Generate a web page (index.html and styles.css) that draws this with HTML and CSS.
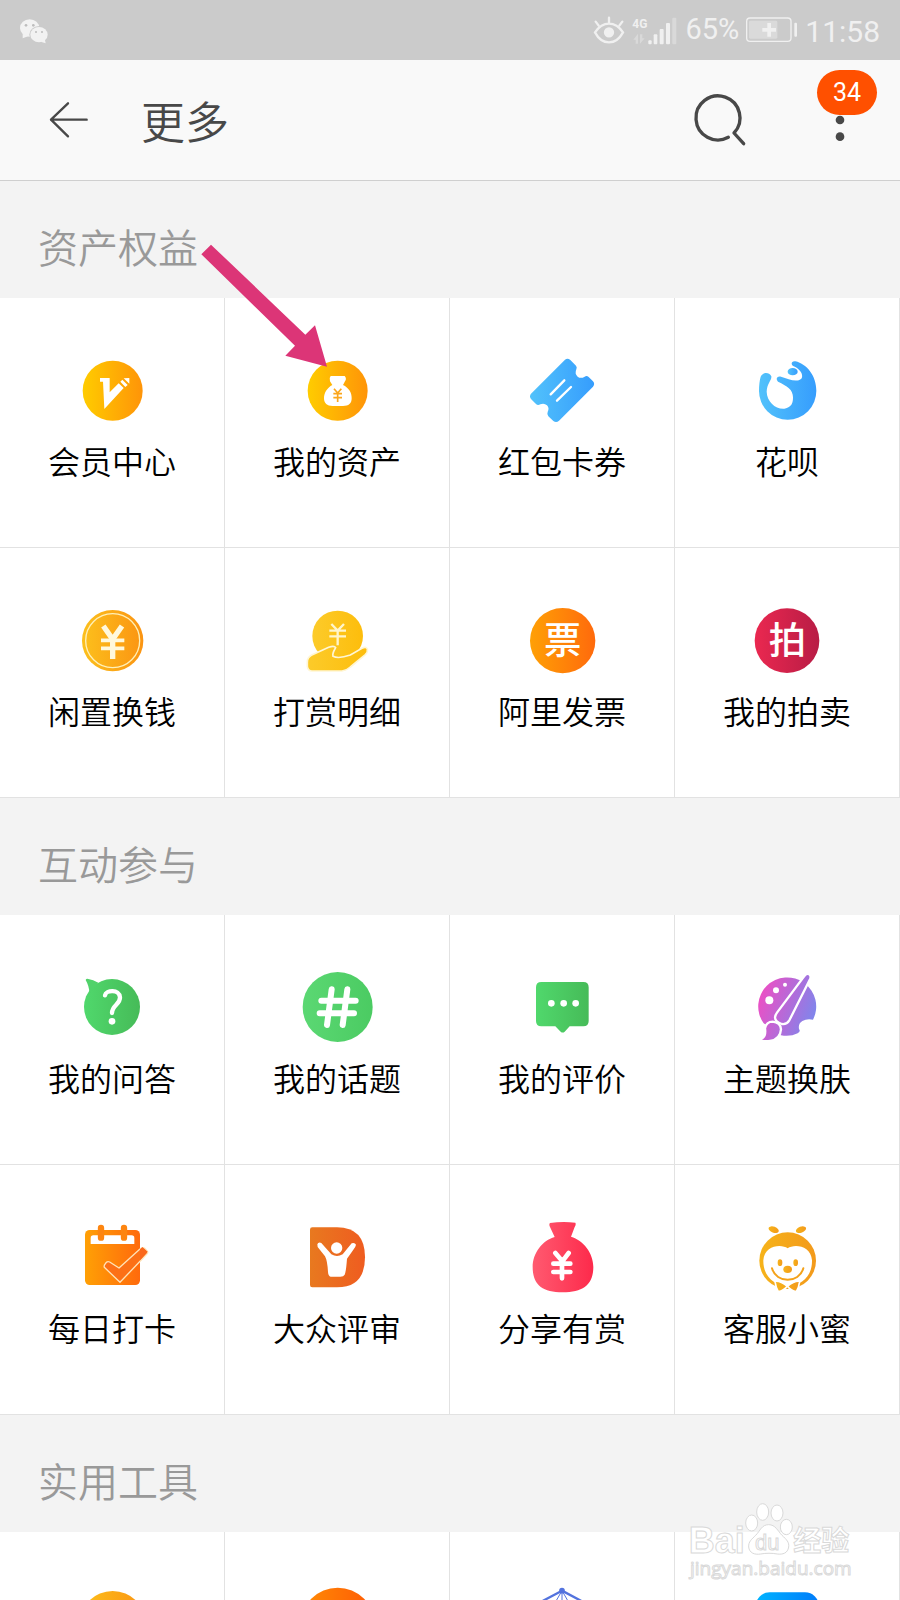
FILE: index.html
```html
<!DOCTYPE html>
<html lang="zh-CN">
<head>
<meta charset="utf-8">
<meta name="viewport" content="width=device-width, initial-scale=1">
<title>更多</title>
<link rel="stylesheet" href="styles.css">
</head>
<body>
<svg class="defs" width="0" height="0" aria-hidden="true">
  <defs>
    <linearGradient id="gold"><stop offset="0" stop-color="#ffcc00"/><stop offset="1" stop-color="#ff9408"/></linearGradient>
    <linearGradient id="coin"><stop offset="0" stop-color="#fcc01c"/><stop offset="1" stop-color="#fb9412"/></linearGradient>
    <linearGradient id="yellow"><stop offset="0" stop-color="#fccb2a"/><stop offset="1" stop-color="#fdbd0c"/></linearGradient>
    <linearGradient id="sky"><stop offset="0" stop-color="#52c2fb"/><stop offset="1" stop-color="#369dfd"/></linearGradient>
    <linearGradient id="orange"><stop offset="0" stop-color="#ffa005"/><stop offset="1" stop-color="#ff6a0c"/></linearGradient>
    <linearGradient id="flame"><stop offset="0" stop-color="#ff8c05"/><stop offset="1" stop-color="#ff5a05"/></linearGradient>
    <linearGradient id="crimson"><stop offset="0" stop-color="#ea2850"/><stop offset="1" stop-color="#b81c45"/></linearGradient>
    <linearGradient id="green"><stop offset="0" stop-color="#50d86c"/><stop offset="1" stop-color="#46bb58"/></linearGradient>
    <linearGradient id="mint"><stop offset="0" stop-color="#5bd873"/><stop offset="1" stop-color="#4bcb62"/></linearGradient>
    <linearGradient id="violet" gradientUnits="userSpaceOnUse" x1="35" y1="80" x2="208" y2="140"><stop offset="0" stop-color="#ee4ec4"/><stop offset="1" stop-color="#7e86ec"/></linearGradient>
    <linearGradient id="rust"><stop offset="0" stop-color="#e8791f"/><stop offset="1" stop-color="#ef5c20"/></linearGradient>
    <linearGradient id="rose"><stop offset="0" stop-color="#ff5a70"/><stop offset="1" stop-color="#fd2a4b"/></linearGradient>
    <linearGradient id="honey"><stop offset="0" stop-color="#f6b31a"/><stop offset="1" stop-color="#f39a1b"/></linearGradient>
    <linearGradient id="blue"><stop offset="0" stop-color="#00b4ff"/><stop offset="1" stop-color="#007bfa"/></linearGradient>
  </defs>
</svg>
<div class="app">
  <div class="status">
    <svg class="status-chat" viewBox="0 0 96 90" fill="#f2f2f2">
      <ellipse cx="35" cy="39" rx="29" ry="26"/><path d="M14 58v12l16-6z"/>
      <ellipse cx="63" cy="59" rx="29" ry="26" fill="#cbcbcb"/>
      <ellipse cx="63" cy="59" rx="26" ry="23"/><path d="M68 80l15 5-3-14z"/>
      <g fill="#bdbdbd"><circle cx="24" cy="31" r="4"/><circle cx="46" cy="31" r="4"/><circle cx="54" cy="51" r="3"/><circle cx="72" cy="51" r="3"/></g>
    </svg>
    <div class="status-info">
      <svg class="status-eye" viewBox="0 0 96 90" fill="none" stroke="#f0f0f0" stroke-width="7" stroke-linecap="round">
        <path d="M6 52Q24 26 48 26T90 52Q74 82 48 82T6 52Z"/><circle cx="48" cy="52" r="12" fill="#f0f0f0"/>
        <path d="M48 8v14M8 20l9 12M88 20l-9 12"/>
      </svg>
      <svg class="status-signal" viewBox="0 0 138 90" fill="#f0f0f0">
        <text x="1" y="40" class="network">4G</text>
        <rect x="49" y="76" width="10" height="12" rx="3"/><rect x="65" y="58" width="11" height="30" rx="3"/><rect x="83" y="42" width="12" height="46" rx="3"/><rect x="102" y="24" width="12" height="64" rx="3"/>
        <g opacity=".4"><rect x="121" y="8" width="12" height="80" rx="3"/><path d="M4 74l14-18v30h-7v-12zM38 70L24 86V58h7v12z"/></g>
      </svg>
      <span class="battery-level">65%</span>
      <svg class="status-battery" viewBox="0 0 156 78" fill="#f0f0f0">
        <rect x="2" y="3" width="133" height="70" rx="10" fill="none" stroke="#f0f0f0" stroke-width="4"/>
        <rect x="9" y="11" width="85" height="54" rx="4" opacity=".4"/>
        <path d="M64 18h11v15h15v11H75v15H64V44H49V33h15z"/><rect x="145" y="17" width="8" height="42" rx="3"/>
      </svg>
      <time>11:58</time>
    </div>
  </div>

  <header class="header">
    <button class="icon-button back" type="button" aria-label="返回">
      <svg viewBox="0 0 144 144" fill="none" stroke="#484848" stroke-width="7" stroke-linecap="round" stroke-linejoin="round"><path d="M69 22L18 71l51 50M18 71h107"/></svg>
    </button>
    <h1>更多</h1>
    <button class="icon-button" type="button" aria-label="搜索">
      <svg viewBox="0 0 180 180" fill="none" stroke="#484848" stroke-width="10" stroke-linecap="round" stroke-linejoin="round"><path d="M115 142A66 66 0 1 1 132 129L161 161"/></svg>
    </button>
    <button class="icon-button" type="button" aria-label="更多">
      <svg viewBox="0 0 180 180" fill="#484848"><circle cx="90" cy="40" r="13"/><circle cx="90" cy="90" r="13"/><circle cx="90" cy="140" r="13"/></svg>
      <span class="badge">34</span>
    </button>
  </header>

  <main class="content">
    <section>
      <h2>资产权益</h2>
      <nav class="grid">
        <a class="tile" href="#">
          <svg viewBox="0 0 240 240"><circle cx="122" cy="122" r="90" fill="url(#gold)"/><g fill="#fff"><path d="M84 84h29v43l27-27 15 14-58 63-4-82H84zM145 95l6-6 16 16-7 6zM155 85l17-1v17z"/></g></svg>
          <span>会员中心</span>
        </a>
        <a class="tile" href="#">
          <svg viewBox="0 0 240 240"><circle cx="122" cy="122" r="90" fill="url(#gold)"/><path fill="#fff" d="M101 78h42q7 8 1 16l-6 11c17 8 27 23 26 40 0 16-9 23-26 23h-31c-17 0-26-8-26-23 0-17 10-32 25-40l-7-11q-4-9 2-16z"/><path fill="none" stroke="#fba61c" stroke-width="5" d="M111 116l11 13 11-13M122 128v28M109 131h26M109 143h26"/></svg>
          <span>我的资产</span>
        </a>
        <a class="tile" href="#">
          <svg viewBox="0 0 240 240"><path fill="url(#sky)" d="M129 29q8-6 16 1l17 17q4 5 1 11-6 14 4 22 9 7 21 0 6-4 12 1l13 13q7 8 0 16L111 212q-8 7-17 1l-15-14q-5-6-2-13 6-12-2-20-9-8-20-3-8 4-13-1l-15-15q-6-8 0-16z"/><path fill="none" stroke="#fff" stroke-width="7" stroke-linecap="round" d="M86 133l41-42M105 152l42-41"/></svg>
          <span>红包卡券</span>
        </a>
        <a class="tile" href="#">
          <svg viewBox="0 0 240 240" fill="url(#sky)"><path d="M41 80C48 66 66 66 73 79C75 90 60 100 59 125C60 155 85 178 112 176C135 172 138 158 138 142C138 118 120 108 93 95C85 88 90 77 102 80C125 88 150 98 163 86C171 74 158 56 140 49C130 44 133 32 145 34C180 42 208 78 208 122A86 86 0 0 1 122 209A86 86 0 0 1 36 122C36 105 38 90 41 80Z"/><ellipse cx="137" cy="65" rx="15" ry="11"/></svg>
          <span>花呗</span>
        </a>
        <a class="tile" href="#">
          <svg viewBox="0 0 240 240" fill="none"><circle cx="122" cy="122" r="92" fill="url(#coin)"/><circle cx="122" cy="122" r="81" stroke="#fff0b8" stroke-width="4"/><path stroke="#fff8dc" stroke-width="16" d="M94 78l28 40 28-40M122 112v65"/><path stroke="#fff8dc" stroke-width="11" d="M87 121h70M87 145h70"/></svg>
          <span>闲置换钱</span>
        </a>
        <a class="tile" href="#">
          <svg viewBox="0 0 240 240"><circle cx="122" cy="108" r="76" fill="url(#yellow)"/><path fill="none" stroke="#fff5cc" stroke-width="7" d="M103 72l19 20 19-20M122 90v46M97 92h50M97 109h50"/><path fill="url(#yellow)" stroke="#fff6d4" stroke-width="5" d="M31 187q0-14 12-21l52-24q17-6 21 1c-4 7-11 17-8 26 12 6 32 3 52-4l35-20q12-7 16 2 2 9-6 17l-45 37q-12 11-25 12H45q-12 0-14-14z"/></svg>
          <span>打赏明细</span>
        </a>
        <a class="tile" href="#">
          <svg viewBox="0 0 240 240"><circle cx="122" cy="122" r="98" fill="url(#orange)"/><text class="seal" x="122" y="163">票</text></svg>
          <span>阿里发票</span>
        </a>
        <a class="tile" href="#">
          <svg viewBox="0 0 240 240"><circle cx="120" cy="122" r="97" fill="url(#crimson)"/><text class="seal" x="121" y="163">拍</text></svg>
          <span>我的拍卖</span>
        </a>
      </nav>
    </section>

    <section>
      <h2>互动参与</h2>
      <nav class="grid">
        <a class="tile" href="#">
          <svg viewBox="0 0 240 240"><g fill="url(#green)"><circle cx="120" cy="120" r="84"/></g><path fill="#50d26a" d="M41 39q2-5 8-3 14 2 30 11l-27 31q0-20-11-39z"/><path fill="none" stroke="#fff" stroke-width="13" stroke-linecap="round" d="M99 85C102 69 142 66 144 91C145 112 120 114 120 138"/><circle cx="120" cy="163" r="10" fill="#fff"/></svg>
          <span>我的问答</span>
        </a>
        <a class="tile" href="#">
          <svg viewBox="0 0 240 240"><circle cx="122" cy="120" r="105" fill="url(#mint)"/><path fill="none" stroke="#fff" stroke-width="18" stroke-linecap="round" d="M104 67L90 174M151 67l-14 107M73 101h103M68 139h103"/></svg>
          <span>我的话题</span>
        </a>
        <a class="tile" href="#">
          <svg viewBox="0 0 240 240"><path fill="url(#green)" d="M58 45h126q16 0 16 16v101q0 16-16 16h-41l-15 16q-6 5-12 0l-16-16H58q-16 0-16-16V61q0-16 16-16z"/><g fill="#fff"><circle cx="88" cy="109" r="10"/><circle cx="125" cy="109" r="10"/><circle cx="161" cy="109" r="10"/></g></svg>
          <span>我的评价</span>
        </a>
        <a class="tile" href="#">
          <svg viewBox="0 0 240 240" fill="url(#violet)"><path d="M50 169A87 87 0 1 1 198 158Q180 154 166 162Q153 170 156 186Q162 194 152 199Q130 210 102 205Z"/><g fill="#fff"><circle cx="67" cy="100" r="12"/><circle cx="87" cy="70" r="9"/><circle cx="114" cy="53" r="6"/></g><g stroke="#fff" stroke-width="7" stroke-linejoin="round"><path d="M173 26q8-9 15-3 5 5 1 14l-62 123q-9 14-23 11-20-7-20-20 1-7 6-14z"/><path d="M48 212q9-8 6-28 4-20 23-20 24 3 25 23-2 30-33 35-14 2-28-1-1-5 7-9z"/></g></svg>
          <span>主题换肤</span>
        </a>
        <a class="tile" href="#">
          <svg viewBox="0 0 240 240"><rect x="39" y="39" width="165" height="165" rx="14" fill="url(#orange)"/><path fill="#fff" d="M56 81V63q0-8 8-8h115q8 0 8 8v18z"/><path fill="none" stroke="#fd8510" stroke-width="19" stroke-linecap="round" d="M87 33v29M156 33v29"/><path fill="#fc7016" stroke="#ffe3b8" stroke-width="4" stroke-linejoin="round" d="M97 151q-2-6 3-11 5-9 13-5l28 18 62-56q9-8 15-3l7 7q5 5-1 11l-80 84z"/><path fill="#fa681c" d="M204 97l7-7 16 14-23 26z"/></svg>
          <span>每日打卡</span>
        </a>
        <a class="tile" href="#">
          <svg viewBox="0 0 240 240"><path fill="url(#rust)" d="M46 31h74q84 0 84 90t-84 90H46q-7 0-7-7V38q0-7 7-7z"/><g fill="#fff"><circle cx="119" cy="93" r="17"/><path d="M61 82q3-8 12-4l30 34q17 10 34 0l27-33q9-4 13 4-1 7-9 17l-18 25q-3 40-7 48-3 6-13 6h-29q-7-1-8-14-2-35-9-47L62 90z"/></g></svg>
          <span>大众评审</span>
        </a>
        <a class="tile" href="#">
          <svg viewBox="0 0 240 240"><path fill="url(#rose)" d="M84 18Q122 12 160 17Q163 22 158 30L147 59C184 70 214 108 214 150C214 202 184 226 122 226C60 226 32 202 32 150C32 108 62 70 98 60L84 30Q80 22 84 18Z"/><path fill="none" stroke="#fff" stroke-width="14" stroke-linecap="round" d="M100 108l21 25 19-25M120 134v50M94 140h51M94 165h51"/></svg>
          <span>分享有赏</span>
        </a>
        <a class="tile" href="#">
          <svg viewBox="0 0 240 240" fill="url(#honey)"><circle cx="122" cy="131" r="85"/><ellipse cx="80" cy="38" rx="16" ry="9" transform="rotate(20 80 38)"/><ellipse cx="162" cy="38" rx="16" ry="9" transform="rotate(-20 162 38)"/><path fill="#fff" d="M122 94C140 80 192 84 195 130C196 177 165 205 122 207C80 205 48 177 49 130C52 84 104 80 122 94Z"/><ellipse cx="99" cy="137" rx="7" ry="10"/><ellipse cx="146" cy="137" rx="7" ry="10"/><ellipse cx="122" cy="157" rx="13" ry="11"/><path fill="none" stroke="#f4a21a" stroke-width="6" stroke-linecap="round" d="M75 154C88 200 156 200 169 154"/><path stroke="#fff" stroke-width="5" stroke-linejoin="round" d="M84 193q16-2 37 15-11 13-27 16-8-14-10-31zM158 193q-16-2-37 15 11 13 27 16 8-14 10-31z"/></svg>
          <span>客服小蜜</span>
        </a>
      </nav>
    </section>

    <section>
      <h2>实用工具</h2>
      <nav class="grid">
        <a class="tile" href="#"><svg viewBox="0 0 240 240"><circle cx="122" cy="121" r="100" fill="url(#coin)"/></svg></a>
        <a class="tile" href="#"><svg viewBox="0 0 240 240"><circle cx="122" cy="122" r="111" fill="url(#flame)"/></svg></a>
        <a class="tile" href="#"><svg viewBox="0 0 240 240" fill="none" stroke="#5373de" stroke-width="7"><path d="M120 20L30 68v104l90 48 90-48V68z"/><path stroke-width="3" d="M120 20v60M120 20L90 72M120 20l30 52"/><circle cx="120" cy="20" r="5" fill="#5373de"/></svg></a>
        <a class="tile" href="#"><svg viewBox="0 0 240 240"><rect x="26" y="25" width="190" height="190" rx="42" fill="url(#blue)"/></svg></a>
      </nav>
    </section>
  </main>

  <svg class="pointer" viewBox="0 0 378 369" aria-hidden="true"><path fill="#dc3577" d="M30 2l283 270 29-28 36 124-125-33 29-30L1 31z"/></svg>

  <svg class="watermark" viewBox="0 0 498 246" fill="#fff" stroke="#d9d9d9" stroke-width="3">
    <text class="mark-latin" x="2" y="160">Bai</text>
    <text class="mark-cjk" x="316" y="154">经验</text>
    <ellipse cx="191" cy="69" rx="18" ry="24"/><ellipse cx="224" cy="36" rx="18" ry="25"/><ellipse cx="267" cy="39" rx="18" ry="24"/><ellipse cx="295" cy="81" rx="18" ry="23"/>
    <path d="M242 74c20 0 27 18 40 32 14 13 22 21 20 35-3 19-18 23-34 21-16-3-34-3-50 0-18 3-34-3-36-21-1-16 9-23 21-35 14-14 18-32 39-32z"/>
    <text class="mark-du" x="201" y="150">du</text>
    <text class="mark-url" x="6" y="225">jingyan.baidu.com</text>
  </svg>
</div>
</body>
</html>
```
FILE: styles.css
```css
* { box-sizing: border-box; }

body {
  margin: 0;
  background: #f3f3f3;
  color: #000;
  font-family: "Noto Sans CJK SC", sans-serif;
}

.defs { position: absolute; }

.app {
  position: relative;
  display: flex;
  flex-direction: column;
  height: 100vh;
  overflow: hidden;
}

.status {
  flex: none;
  display: flex;
  align-items: center;
  justify-content: space-between;
  height: 60px;
  padding: 0 20px 0 18px;
  background: #cbcbcb;
  color: #f0f0f0;
  font: 30px/36px Roboto, sans-serif;
}

.status-info {
  display: flex;
  align-items: center;
  gap: 7px;
}

.status-chat { width: 32px; height: 30px; }
.status-eye { width: 32px; height: 30px; }
.status-signal { width: 46px; height: 30px; }
.status-battery { width: 52px; height: 26px; }
.battery-level { padding-bottom: 2px; font-size: 29px; }
.status time { padding-top: 3px; }
.network { font: 700 36px Roboto, sans-serif; }

.header {
  flex: none;
  display: flex;
  align-items: center;
  gap: 60px;
  height: 121px;
  padding: 0 30px 0 45px;
  background: #f9f9f9;
  border-bottom: 1px solid #cfcfcf;
}

.header h1 {
  flex: 1;
  margin: 0 0 0 -12px;
  color: #484848;
  font-size: 44px;
  font-weight: 350;
  line-height: 60px;
}

.icon-button {
  position: relative;
  width: 60px;
  height: 60px;
  padding: 0;
  border: 0;
  background: none;
}

.icon-button svg { display: block; width: 100%; height: 100%; }
.back { width: 48px; height: 48px; }

.badge {
  position: absolute;
  left: 7px;
  top: -20px;
  width: 60px;
  height: 45px;
  border-radius: 23px;
  background: #ff5000;
  color: #fff;
  font: 25px/46px Roboto, sans-serif;
  text-align: center;
}

.content {
  flex: 1;
  min-height: 0;
  overflow: hidden;
}

.content h2 {
  height: 117px;
  margin: 0;
  padding: 35px 38px 0;
  color: #999;
  font-size: 40px;
  font-weight: 350;
  line-height: 60px;
}

.grid {
  display: grid;
  grid-template-columns: repeat(4, 1fr);
  grid-auto-rows: 250px;
  background: #fff;
}

.tile {
  display: flex;
  flex-direction: column;
  align-items: center;
  gap: 10px;
  padding-top: 52px;
  border-right: 1px solid #e2e2e2;
  border-bottom: 1px solid #e2e2e2;
  color: #000;
  font-size: 32px;
  font-weight: 350;
  line-height: 40px;
  text-decoration: none;
}

.tile svg { width: 80px; height: 80px; }

.seal {
  fill: #fff;
  font-size: 112px;
  font-weight: 500;
  text-anchor: middle;
}

.pointer {
  position: absolute;
  left: 201px;
  top: 244px;
  width: 126px;
  height: 123px;
}

.watermark {
  position: absolute;
  right: 46px;
  bottom: 18px;
  width: 166px;
  height: 82px;
}

.mark-latin { font: 700 108px "Liberation Sans", sans-serif; }
.mark-cjk { font: 700 84px "Noto Sans CJK SC", sans-serif; }
.mark-du { font: 66px "Liberation Sans", sans-serif; }
.mark-url { font: 57px "Open Sans", sans-serif; }
```
